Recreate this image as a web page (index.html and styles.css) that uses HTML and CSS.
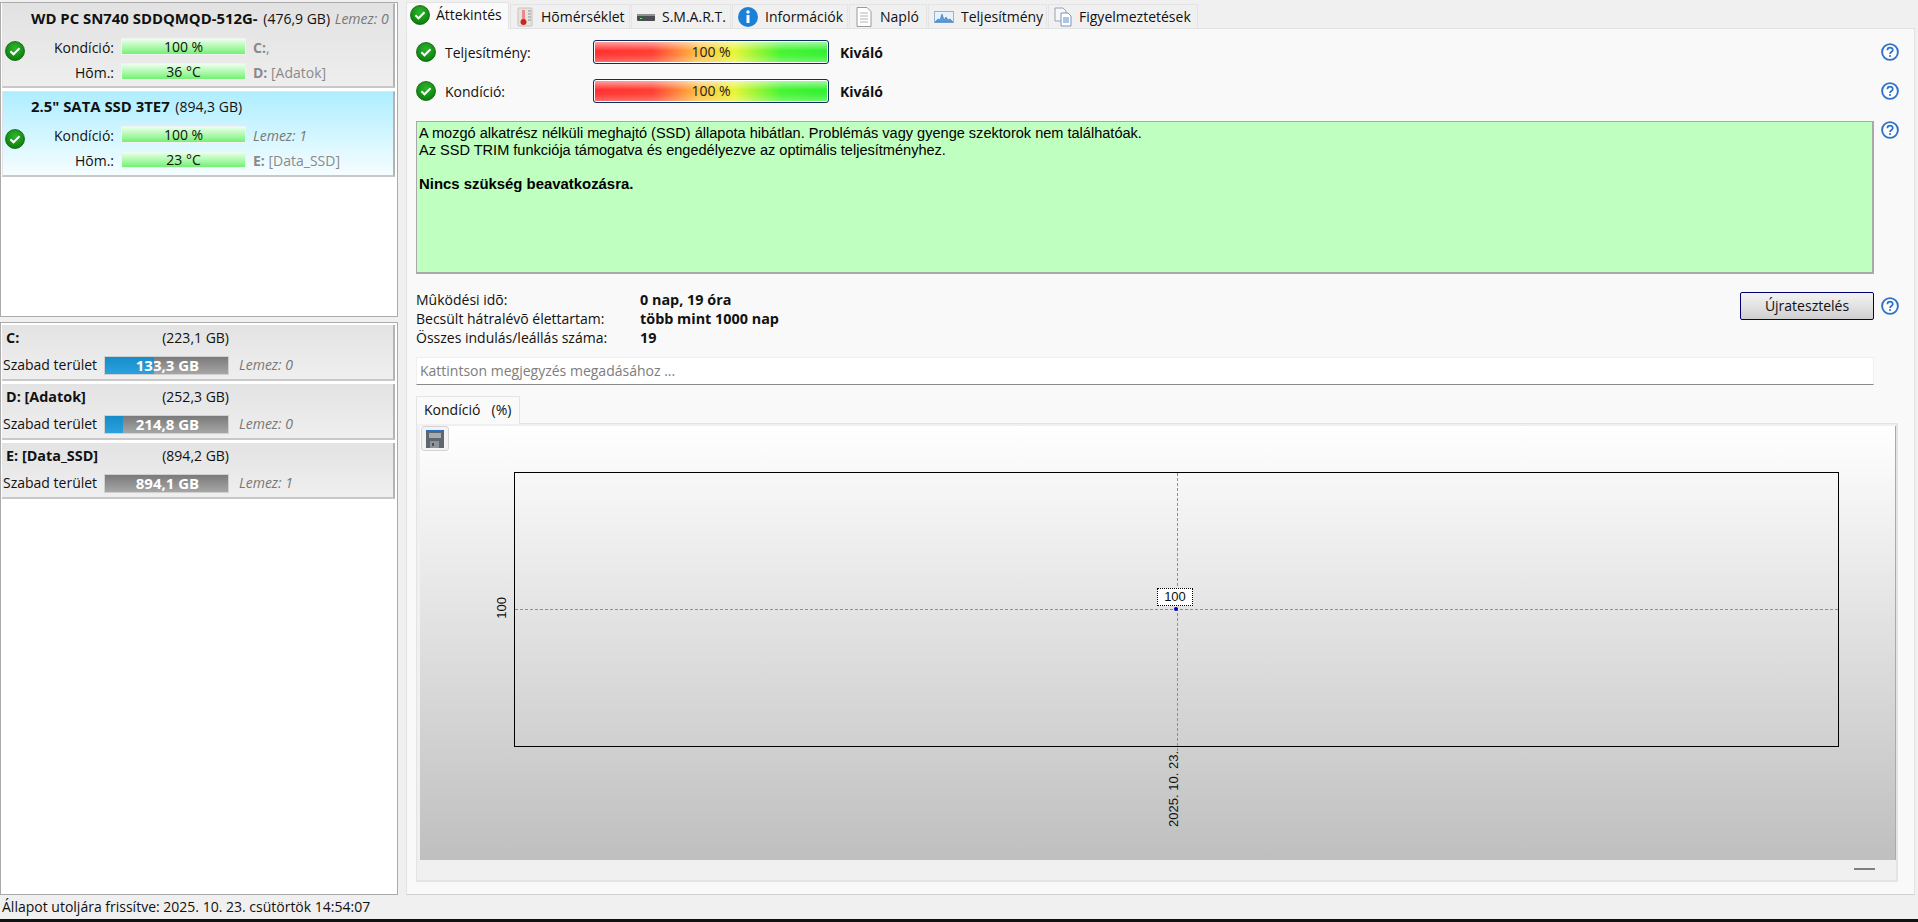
FILE: index.html
```html
<!DOCTYPE html>
<html lang="hu">
<head>
<meta charset="utf-8">
<title>Hard Disk Sentinel</title>
<link rel="stylesheet" href="styles.css">
</head>
<body>
<svg class="defs" width="0" height="0">
  <defs>
    <radialGradient id="gc" cx="50%" cy="35%" r="70%"><stop offset="0" stop-color="#2fb52f"/><stop offset="1" stop-color="#067a06"/></radialGradient>
    <symbol id="ok" viewBox="0 0 20 20"><circle cx="10" cy="10" r="9.5" fill="url(#gc)" stroke="#0b5f0b" stroke-width=".8"/><path d="M5.4 10.3l3.1 3 6-6" fill="none" stroke="#fff" stroke-width="2"/></symbol>
    <symbol id="help" viewBox="0 0 18 18"><circle cx="9" cy="9" r="7.9" fill="#fff" stroke="#2f72c8" stroke-width="1.9"/><path d="M6.4 7.2c0-3.3 5.4-3.3 5.4-.2 0 2-2.8 2-2.8 4" fill="none" stroke="#2f72c8" stroke-width="1.7"/><rect x="8.1" y="12.1" width="1.8" height="1.8" fill="#2f72c8"/></symbol>
  </defs>
</svg>
<div class="main">
  <aside class="side">
    <section class="list drives">
      <article class="drive grey">
        <h2 class="drive-title"><b>WD PC SN740 SDDQMQD-512G-</b> <span>(476,9 GB)</span> <i>Lemez: 0</i></h2>
        <div class="drive-body">
          <svg class="ok"><use href="#ok"/></svg>
          <div class="stat-grid">
            <span class="k">Kondíció:</span><span class="gbar">100 %</span><span class="r"><b>C:</b>,</span>
            <span class="k">Hõm.:</span><span class="gbar">36 °C</span><span class="r"><b>D:</b> [Adatok]</span>
          </div>
        </div>
      </article>
      <article class="drive blue">
        <h2 class="drive-title"><b>2.5" SATA SSD 3TE7</b> <span>(894,3 GB)</span></h2>
        <div class="drive-body">
          <svg class="ok"><use href="#ok"/></svg>
          <div class="stat-grid">
            <span class="k">Kondíció:</span><span class="gbar">100 %</span><span class="r"><i>Lemez: 1</i></span>
            <span class="k">Hõm.:</span><span class="gbar">23 °C</span><span class="r"><b>E:</b> [Data_SSD]</span>
          </div>
        </div>
      </article>
    </section>
    <section class="list volumes">
      <article class="vol">
        <div class="vol-top"><b>C:</b><span>(223,1 GB)</span></div>
        <div class="vol-row"><span class="vl">Szabad terület</span><span class="vbar"><span class="vfill" style="width:40%"></span><span class="vt">133,3 GB</span></span><i>Lemez: 0</i></div>
      </article>
      <article class="vol">
        <div class="vol-top"><b>D: [Adatok]</b><span>(252,3 GB)</span></div>
        <div class="vol-row"><span class="vl">Szabad terület</span><span class="vbar"><span class="vfill" style="width:15%"></span><span class="vt">214,8 GB</span></span><i>Lemez: 0</i></div>
      </article>
      <article class="vol">
        <div class="vol-top"><b>E: [Data_SSD]</b><span>(894,2 GB)</span></div>
        <div class="vol-row"><span class="vl">Szabad terület</span><span class="vbar"><span class="vt">894,1 GB</span></span><i>Lemez: 1</i></div>
      </article>
    </section>
  </aside>
  <main class="content">
    <nav class="tabs">
      <div class="tab active t1"><svg class="ok"><use href="#ok"/></svg>Áttekintés</div>
      <div class="tab t2"><svg class="ti" viewBox="0 0 18 20"><rect x="2" y="1" width="14" height="18" rx="1" fill="#e6e4df" stroke="#c5c2bb"/><path d="M12 4h3M12 7h3M12 10h3M12 13h3" stroke="#8a8f9a"/><rect x="6" y="3" width="3" height="11" fill="#e88"/><circle cx="7.5" cy="15" r="3" fill="#c8281c"/></svg>Hõmérséklet</div>
      <div class="tab t3"><svg class="ti" viewBox="0 0 18 20"><rect x="0" y="7" width="18" height="7" rx="1" fill="#4c4f52"/><rect x="0" y="7" width="18" height="2" fill="#8f9295"/><rect x="3" y="11" width="2" height="1" fill="#5f5"/></svg>S.M.A.R.T.</div>
      <div class="tab t4"><svg class="info" viewBox="0 0 20 20"><circle cx="10" cy="10" r="10" fill="#1a80d8"/><circle cx="10" cy="5" r="1.7" fill="#fff"/><rect x="8.5" y="8" width="3" height="8" fill="#fff"/></svg>Információk</div>
      <div class="tab t5"><svg class="ti" viewBox="0 0 18 20"><path d="M2 .5h10l4 4v15H2z" fill="#fff" stroke="#9a9a9a"/><path d="M5 6h8M5 9h8M5 12h8M5 15h8" stroke="#b5b5b5"/></svg>Napló</div>
      <div class="tab t6"><svg class="ti wide" viewBox="0 0 20 16"><rect x=".5" y="2.5" width="19" height="11" fill="#e8f2fb" stroke="#8fb4d8"/><path d="M1 13l3-3 2 1 2-6 2 6 2-3 2 3 2-1 3 3z" fill="#5d9fdc" stroke="#2a74bd" stroke-width=".6"/></svg>Teljesítmény</div>
      <div class="tab t7"><svg class="ti" viewBox="0 0 18 20"><path d="M1 1h8l3 3v10H1z" fill="#f4f6f9" stroke="#9aa3b0"/><path d="M7 6h7l3 3v10H7z" fill="#fff" stroke="#7d93b5"/><path d="M9 11h6M9 13h6M9 15h6" stroke="#4e8bd2"/></svg>Figyelmeztetések</div>
    </nav>
    <div class="page">
      <div class="meter-row">
        <svg class="ok"><use href="#ok"/></svg><span class="m-label">Teljesítmény:</span>
        <span class="meter"><span>100 %</span></span><b class="m-val">Kiváló</b>
        <svg class="help"><use href="#help"/></svg>
      </div>
      <div class="meter-row second">
        <svg class="ok"><use href="#ok"/></svg><span class="m-label">Kondíció:</span>
        <span class="meter"><span>100 %</span></span><b class="m-val">Kiváló</b>
        <svg class="help"><use href="#help"/></svg>
      </div>
      <div class="report-row">
        <div class="report">
          A mozgó alkatrész nélküli meghajtó (SSD) állapota hibátlan. Problémás vagy gyenge szektorok nem találhatóak.<br>
          Az SSD TRIM funkciója támogatva és engedélyezve az optimális teljesítményhez.<br><br>
          <b>Nincs szükség beavatkozásra.</b>
        </div>
        <svg class="help"><use href="#help"/></svg>
      </div>
      <div class="facts-row">
        <dl class="facts">
          <dt>Mûködési idõ:</dt><dd>0 nap, 19 óra</dd>
          <dt>Becsült hátralévõ élettartam:</dt><dd>több mint 1000 nap</dd>
          <dt>Összes indulás/leállás száma:</dt><dd>19</dd>
        </dl>
        <button class="retest">Újratesztelés</button>
        <svg class="help"><use href="#help"/></svg>
      </div>
      <div class="note">Kattintson megjegyzés megadásához ...</div>
      <div class="subtab">Kondíció&nbsp; (%)</div>
      <div class="subpanel">
        <div class="chart">
          <div class="save"><svg viewBox="0 0 18 18" width="18" height="18"><rect width="18" height="18" fill="#60666e"/><rect width="18" height="2" fill="#2a6fc4"/><rect x="3" y="3" width="12" height="5" fill="#a8acb2"/><rect x="4" y="11" width="9" height="7" fill="#8f949a"/><rect x="6" y="13" width="2" height="3" fill="#4b5056"/></svg></div>
          <div class="plot">
            <span class="vline"></span>
            <span class="hline"></span>
            <span class="dot"></span>
            <span class="tip">100</span>
            <span class="ylab">100</span>
            <span class="xlab">2025. 10. 23.</span>
          </div>
        </div>
        <div class="chart-foot"><span class="dash"></span></div>
      </div>
    </div>
  </main>
</div>
<footer class="status">Állapot utoljára frissítve: 2025. 10. 23. csütörtök 14:54:07</footer>
<div class="edge"></div>
</body>
</html>
```
FILE: styles.css
```css
* { box-sizing: border-box; }
html, body { margin: 0; padding: 0; height: 922px; overflow: hidden; }
body {
  display: flex; flex-direction: column;
  background: #f0f0f0; color: #111;
  font: 14px/18px "Open Sans", "Noto Sans", sans-serif;
}
.defs { position: absolute; }
.main { display: flex; height: 895px; padding-top: 2px; }

/* left column */
.side { width: 398px; flex: none; display: flex; flex-direction: column; gap: 5px; }
.list { background: #fff; border: 1px solid #ababab; padding: 0 2px 0 1px; }
.drives { height: 315px; }
.volumes { flex: 1; padding-top: 2px; }
.drive { height: 85px; border: 1px solid #e3e3e3; border-right: 2px solid #b4b4b4; border-bottom: 2px solid #c8c8c8; margin-bottom: 3px; overflow: hidden; }
.grey { background: linear-gradient(#e2e2e2, #eeeeee); }
.blue { background: linear-gradient(#aeeeff, #f6fdff); height: 86px; }
.drive-title { margin: 0; height: 30px; padding: 5px 0 0 28px; font-size: 14px; font-weight: 400; line-height: 19px; white-space: nowrap; }
.drive-title b { font-size: 14.9px; }
.drive-title span { margin-left: 2px; }
.drive-title i { color: #777; margin-left: 1px; }
.drive-body { display: flex; align-items: flex-start; padding-left: 2px; }
.ok { width: 20px; height: 20px; flex: none; }
.drive-body .ok { margin-top: 7px; margin-right: 1px; }
.stat-grid { display: grid; grid-template-columns: 88px 125px 1fr; column-gap: 7px; row-gap: 8px; grid-auto-rows: 17px; padding-top: 4px; }
.k { text-align: right; line-height: 19px; }
.gbar { background: linear-gradient(#ecffec, #a0f8a0 65%, #72f072); text-align: center; line-height: 15px; border: 1px solid #f2f2f2; }
.r { color: #8a8a8a; line-height: 19px; white-space: nowrap; }
.r i { color: #777; }

.vol { height: 56px; margin-bottom: 3px; background: linear-gradient(#e3e3e3, #efefef); border-right: 2px solid #b4b4b4; border-bottom: 2px solid #c8c8c8; }
.vol-top { display: flex; justify-content: space-between; width: 227px; padding: 4px 0 0 4px; height: 30px; }
.vol-top b { font-size: 14.4px; }
.vol-row { display: flex; align-items: center; padding-left: 1px; height: 20px; }
.vl { width: 101px; flex: none; }
.vbar { position: relative; width: 125px; height: 19px; flex: none; background: linear-gradient(#7a7a7a, #a6a6a6); border: 1px solid #d0d0d0; }
.vfill { display: block; height: 100%; background: linear-gradient(#168cc8, #2ba2e0); }
.vt { position: absolute; inset: 0; text-align: center; color: #fff; font-weight: 700; line-height: 16px; font-size: 15px; padding-left: 2px; }
.vol-row i { color: #777; margin-left: 10px; }

/* right column */
.content { flex: 1; display: flex; flex-direction: column; padding-left: 8px; min-width: 0; }
.tabs { display: flex; height: 26px; align-items: flex-end; }
.tab { display: flex; align-items: center; height: 24px; background: #f0f0f0; border: 1px solid #e4e4e4; border-bottom: 0; margin-right: 1px; padding-left: 5px; gap: 7px; white-space: nowrap; }
.tab.active { height: 27px; margin-bottom: -1px; background: #fafafa; position: relative; padding-left: 3px; padding-bottom: 3px; gap: 6px; color: #111; }
.t1 { width: 103px; } .t2 { width: 120px; } .t3 { width: 100px; } .t4 { width: 116px; } .t5 { width: 78px; } .t6 { width: 119px; } .t7 { width: 150px; }
.ti { width: 18px; height: 20px; flex: none; }
.ti.wide { width: 20px; }
.info { width: 20px; height: 20px; flex: none; }
.page { flex: 1; margin-right: 3px; background: #f9f9f9; border: 1px solid #e2e2e2; border-bottom: 1px solid #d0d0d0; padding: 0 0 0 9px; }
.meter-row { display: flex; align-items: center; height: 24px; margin-top: 11px; }
.meter-row.second { margin-top: 15px; }
.m-label { width: 157px; padding: 2px 0 0 9px; flex: none; }
.meter { width: 236px; height: 24px; flex: none; border: 1px solid #0b2f63; border-radius: 3px; text-align: center; line-height: 22px; color: #222;
  background:
    linear-gradient(rgba(255,255,255,.6), rgba(255,255,255,0) 45%, rgba(255,255,255,.05) 65%, rgba(255,255,255,.3)),
    linear-gradient(90deg, #ff2f2f, #ff3d30 25%, #ffc040 45%, #e8f535 60%, #45f530 80%, #30f030);
  box-shadow: inset 0 0 0 1px #fff; }
.m-val { margin-left: 11px; flex: 1; padding-top: 1px; }
.help { width: 18px; height: 18px; flex: none; margin-right: 15px; margin-left: 7px; }
.report-row { display: flex; align-items: flex-start; margin-top: 18px; height: 153px; }
.report { flex: 1; height: 153px; border: 2px solid #a9a9a9; border-width: 1px 2px 2px 1px; background: #bfffbf; color: #000; font: 14.55px/17px "Liberation Sans", Arial, sans-serif; padding: 3px 0 0 2px; }
.report b { font-size: 14.9px; }
.facts-row { display: flex; align-items: flex-start; margin-top: 16px; height: 62px; }
.facts { margin: 0; flex: 1; display: grid; grid-template-columns: 224px 1fr; grid-auto-rows: 19px; line-height: 19px; }
.facts dd { margin: 0; font-weight: 700; font-size: 14.4px; }
.retest { width: 134px; height: 28px; margin-top: 2px; border: 1px solid #00006e; border-radius: 2px; background: linear-gradient(#f4f4f4, #d0d0d0); font: inherit; color: #111; padding: 0; }
.facts-row .help { margin-top: 7px; }
.note { width: 1458px; height: 28px; background: #fff; border: 1px solid #efefef; border-bottom: 1px solid #8a8a8a; color: #7d7d7d; padding: 4px 0 0 3px; margin-top: 5px; }
.subtab { width: 104px; height: 28px; margin-top: 11px; border: 1px solid #e4e4e4; border-bottom: 0; background: #fafafa; padding: 4px 0 0 7px; position: relative; z-index: 1; margin-bottom: -1px; word-spacing: 2px; }
.subpanel { width: 1482px; height: 459px; border: 1px solid #e4e4e4; border-width: 1px 2px 2px 1px; background: #f0f0f0; }
.chart { position: relative; height: 434px; margin: 2px 0 0 3px; width: 1476px; padding: 46px 58px 113px 94px; background: linear-gradient(#ffffff, #bfbfbf); border-right: 1px solid #aaa; }
.save { position: absolute; left: 1px; top: 0; width: 28px; height: 25px; background: #f3f3f3; border: 1px solid #d4d4d4; border-radius: 3px; display: flex; align-items: center; justify-content: center; }
.plot { position: relative; width: 1325px; height: 275px; border: 1px solid #000; font: 13px/15px "Liberation Sans", Arial, sans-serif; color: #111; }
.vline { position: absolute; left: 50%; top: 0; bottom: -5px; border-left: 1px dashed #8f8f8f; }
.hline { position: absolute; left: 0; right: 0; top: 136px; border-top: 1px dashed #8f8f8f; }
.dot { position: absolute; left: 659px; top: 134px; width: 4px; height: 4px; border-radius: 50%; background: #0000c8; }
.tip { position: absolute; left: 642px; top: 115px; width: 36px; height: 18px; background: #fff; border: 1px dotted #000; text-align: center; line-height: 15px; }
.ylab { position: absolute; left: -21px; top: 124px; writing-mode: vertical-rl; transform: rotate(180deg); }
.xlab { position: absolute; left: 651px; top: 278px; white-space: nowrap; writing-mode: vertical-rl; transform: rotate(180deg); }
.chart-foot { height: 21px; position: relative; }
.dash { position: absolute; right: 21px; top: 8px; width: 21px; height: 2px; background: #808080; }
.status { height: 24px; padding: 2px 0 0 2px; line-height: 20px; background: #f0f0f0; }
.edge { height: 3px; background: #111; }
```
